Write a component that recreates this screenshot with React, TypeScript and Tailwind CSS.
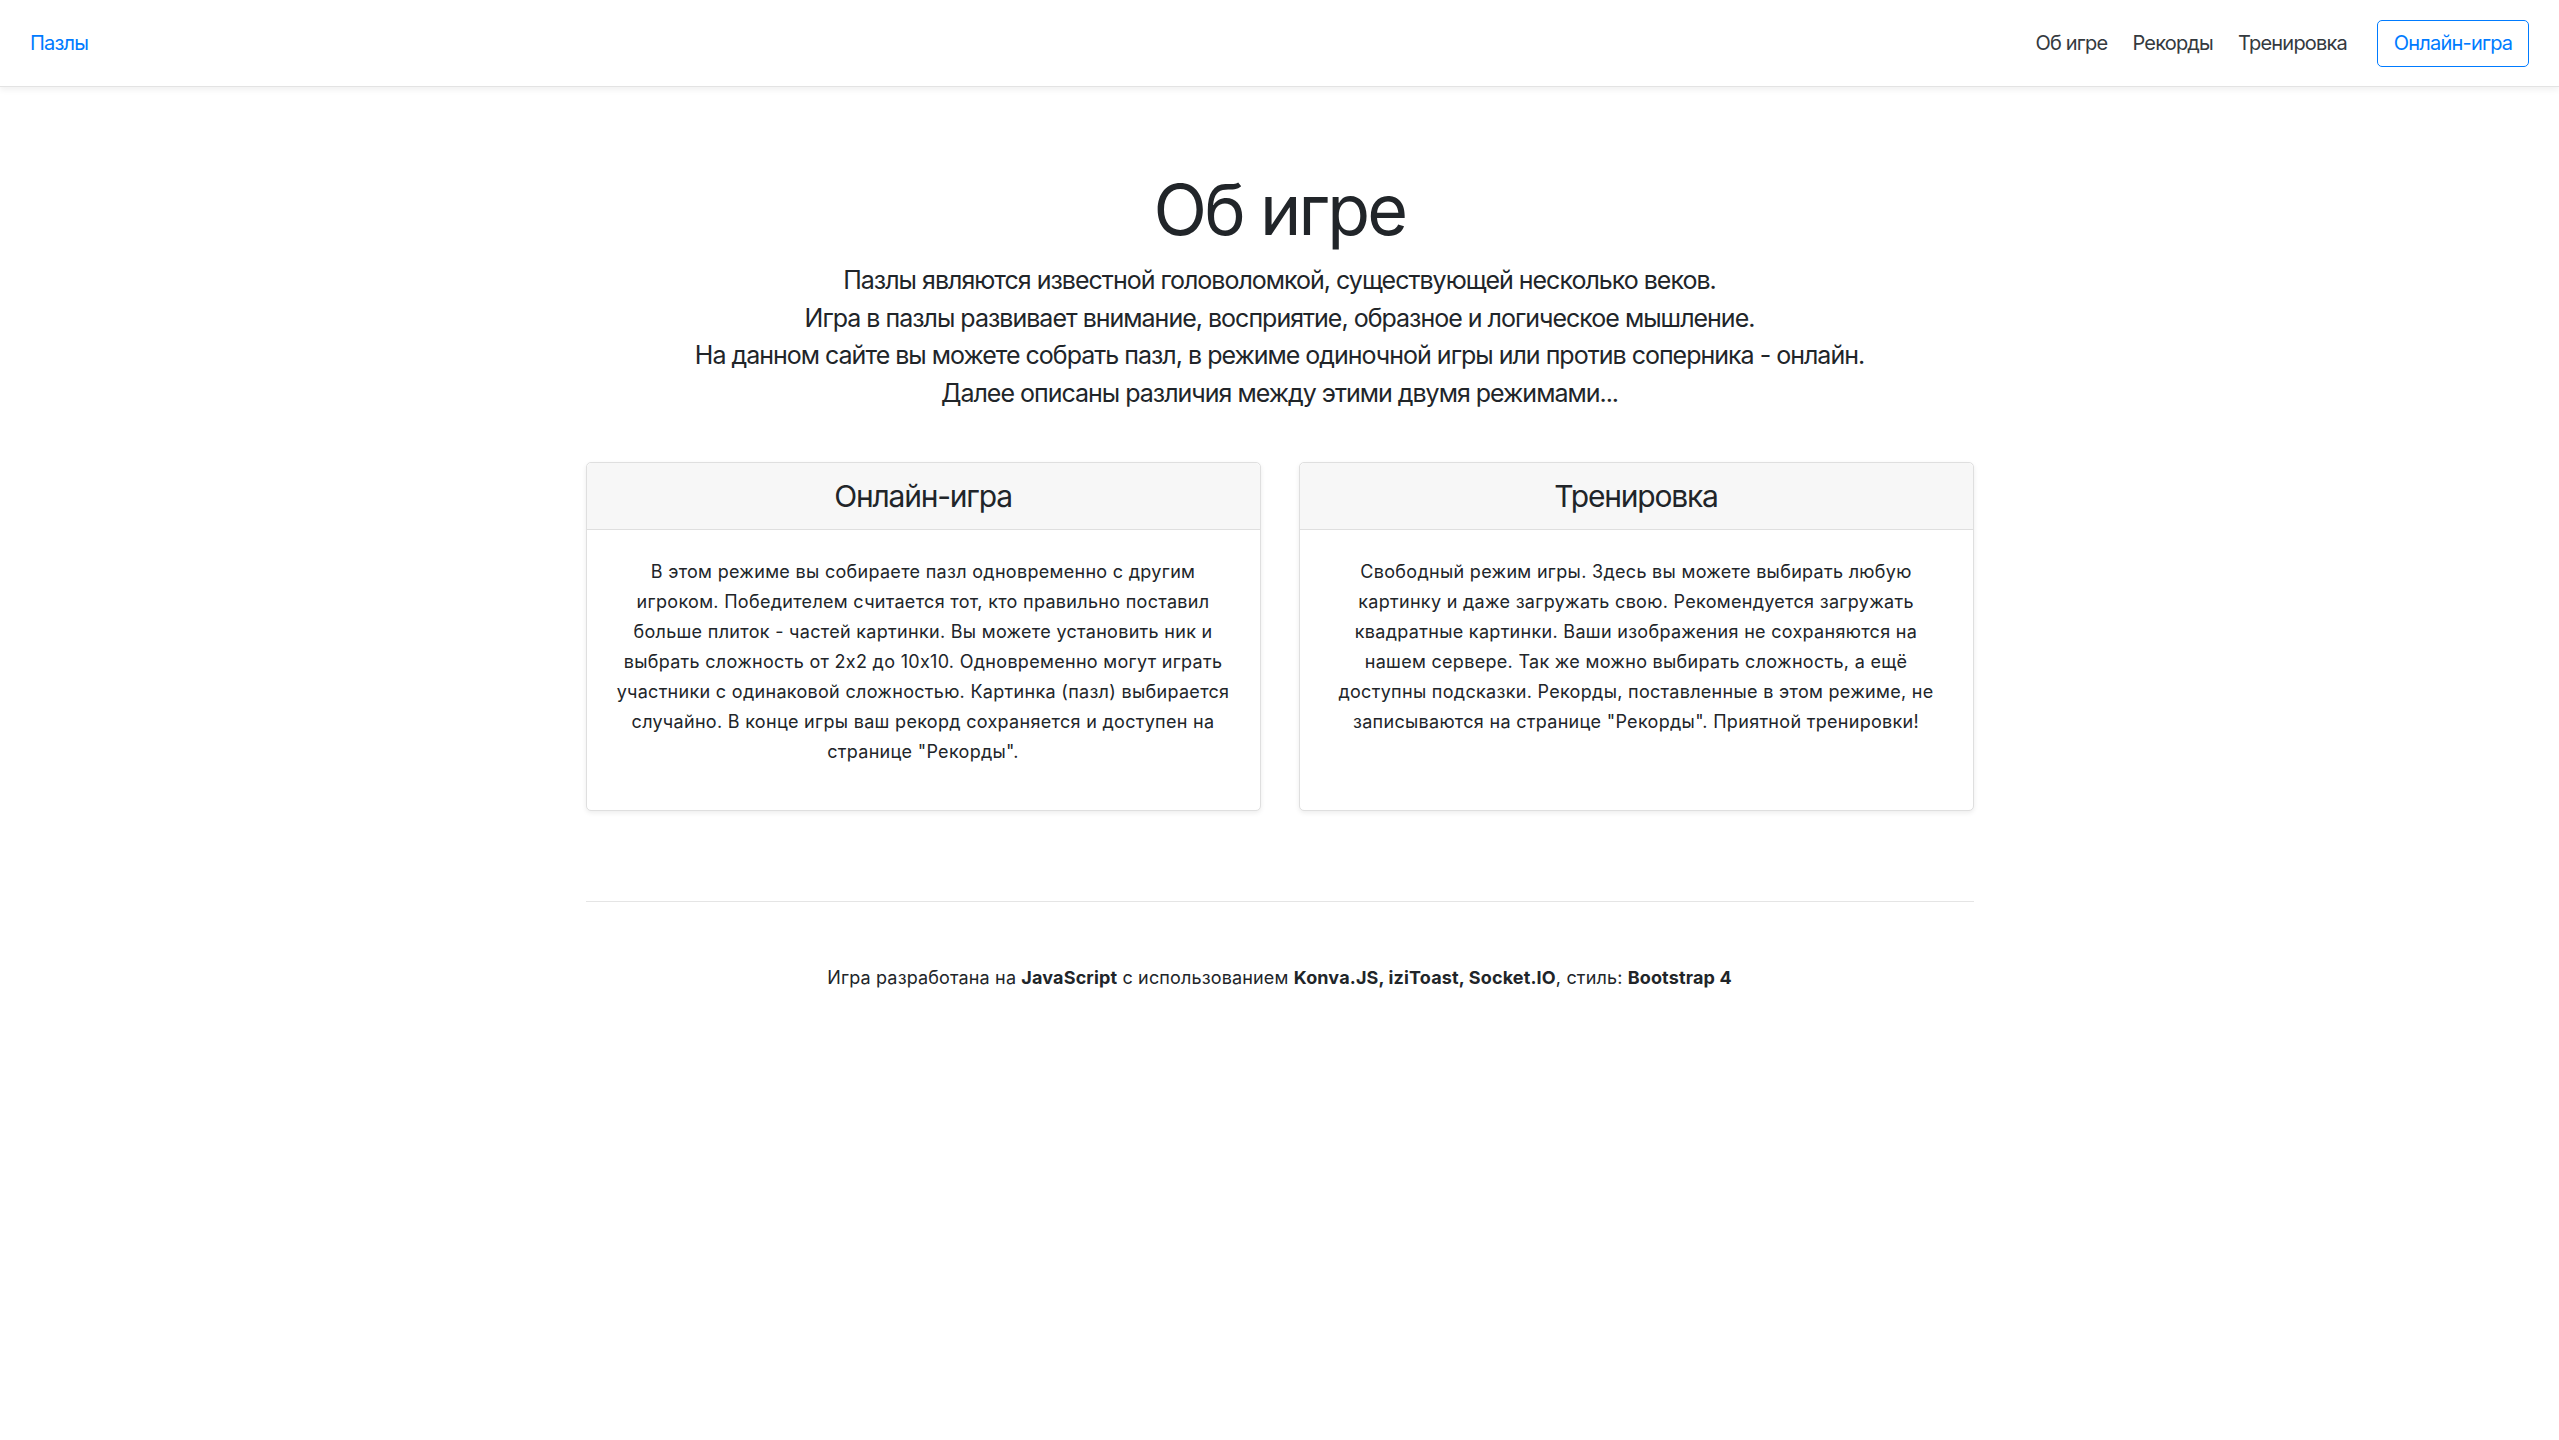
import React from "react";

const leftLines = [
  "В этом режиме вы собираете пазл одновременно с другим",
  "игроком. Победителем считается тот, кто правильно поставил",
  "больше плиток - частей картинки. Вы можете установить ник и",
  "выбрать сложность от 2x2 до 10x10. Одновременно могут играть",
  "участники с одинаковой сложностью. Картинка (пазл) выбирается",
  "случайно. В конце игры ваш рекорд сохраняется и доступен на",
  'странице "Рекорды".',
];

const rightLines = [
  "Свободный режим игры. Здесь вы можете выбирать любую",
  "картинку и даже загружать свою. Рекомендуется загружать",
  "квадратные картинки. Ваши изображения не сохраняются на",
  "нашем сервере. Так же можно выбирать сложность, а ещё",
  "доступны подсказки. Рекорды, поставленные в этом режиме, не",
  'записываются на странице "Рекорды". Приятной тренировки!',
];

export default function App() {
  return (
    <div
      className="min-h-screen bg-white text-[#212529]"
      style={{ fontFamily: "Inter, 'Noto Sans', sans-serif" }}
    >
      <nav className="h-[87px] flex items-center justify-between px-[30px] border-b border-[#e3e3e3] shadow-[0_3px_6px_rgba(0,0,0,0.06)]">
        <a className="text-[20px] text-[#007bff] leading-[30px] tracking-[-0.04em]">Пазлы</a>
        <div className="flex items-center">
          <a className="text-[20px] leading-[30px] text-[#343a40] px-[12.5px] tracking-[-0.04em]">Об игре</a>
          <a className="text-[20px] leading-[30px] text-[#343a40] px-[12.5px] tracking-[-0.04em]">Рекорды</a>
          <a className="text-[20px] leading-[30px] text-[#343a40] px-[12.5px] tracking-[-0.04em]">Тренировка</a>
          <button className="ml-[17.5px] h-[47px] w-[152px] rounded-[5px] border border-[#007bff] text-[#007bff] text-[20px] leading-[30px] tracking-[-0.04em]">
            Онлайн-игра
          </button>
        </div>
      </nav>

      <main className="w-[1388px] mx-auto">
        <h1 className="mt-[81px] text-center text-[70px] leading-[84px] font-normal tracking-[-0.04em]">Об игре</h1>
        <div className="mt-[10px] text-center text-[25px] leading-[37.5px] font-normal tracking-[-0.04em]">
          <p>Пазлы являются известной головоломкой, существующей несколько веков.</p>
          <p>Игра в пазлы развивает внимание, восприятие, образное и логическое мышление.</p>
          <p>На данном сайте вы можете собрать пазл, в режиме одиночной игры или против соперника - онлайн.</p>
          <p>Далее описаны различия между этими двумя режимами...</p>
        </div>

        <div className="mt-[50px] grid grid-cols-2 gap-[38px]">
          <Card title="Онлайн-игра" lines={leftLines} />
          <Card title="Тренировка" lines={rightLines} />
        </div>

        <hr className="mt-[90px] border-0 border-t border-[#e5e5e5]" />

        <p className="mt-[62px] text-center text-[18px] leading-[27px] tracking-[0.15px]">
          Игра разработана на <b className="font-bold">JavaScript</b> с использованием{" "}
          <b className="font-bold">Konva.JS, iziToast, Socket.IO</b>, стиль:{" "}
          <b className="font-bold">Bootstrap 4</b>
        </p>
      </main>
    </div>
  );
}

function Card({ title, lines }: { title: string; lines: string[] }) {
  return (
    <div className="flex flex-col rounded-[5px] border border-[#dfdfdf] shadow-[0_2px_5px_rgba(0,0,0,0.075)] bg-white">
      <div className="h-[67px] flex items-center justify-center bg-[#f7f7f7] border-b border-[#dfdfdf] rounded-t-[5px]">
        <h4 className="text-[30px] leading-[36px] font-normal tracking-[-0.04em]">{title}</h4>
      </div>
      <div className="px-[25px] pt-[27px] pb-[43px]">
        <p className="text-center text-[18px] leading-[30px] tracking-[0.3px]">
          {lines.map((l, i) => (
            <span key={i} className="block whitespace-nowrap">
              {l}
            </span>
          ))}
        </p>
      </div>
    </div>
  );
}
